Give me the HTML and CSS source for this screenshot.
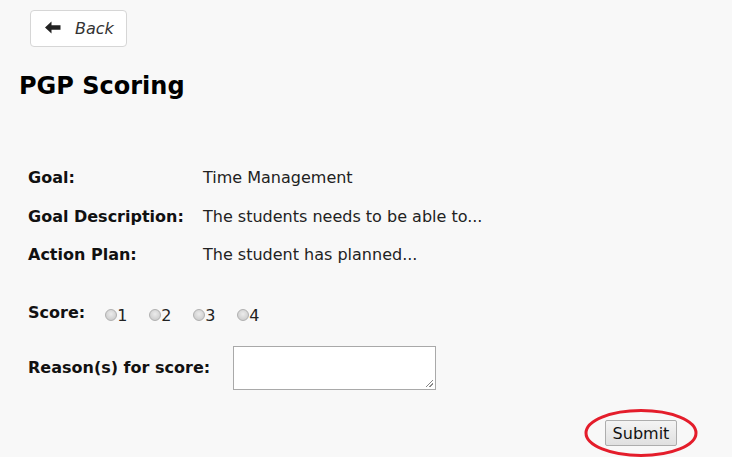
FILE: index.html
```html
<!DOCTYPE html>
<html>
<head>
<meta charset="utf-8">
<link rel="stylesheet" href="styles.css">
</head>
<body>
<div class="page">
  <div class="topbar">
    <button class="back-btn" type="button">
      <svg class="back-icon" width="16" height="13" viewBox="0 0 16 13"><path d="M0 6.5 L6.5 0.5 L6.5 4.3 L15.5 4.3 L15.5 8.7 L6.5 8.7 L6.5 12.5 Z" fill="#222"/></svg>
      <span class="back-text">Back</span>
    </button>
  </div>
  <h1 class="title">PGP Scoring</h1>
  <div class="details">
    <div class="row"><div class="label">Goal:</div><div class="value">Time Management</div></div>
    <div class="row"><div class="label">Goal Description:</div><div class="value">The students needs to be able to...</div></div>
    <div class="row"><div class="label">Action Plan:</div><div class="value">The student has planned...</div></div>
  </div>
  <div class="score">
    <span class="label">Score:</span>
    <label class="opt"><span class="radio"></span>1</label>
    <label class="opt"><span class="radio"></span>2</label>
    <label class="opt"><span class="radio"></span>3</label>
    <label class="opt"><span class="radio"></span>4</label>
  </div>
  <div class="reason">
    <span class="label">Reason(s) for score:</span>
    <div class="textarea"><span class="grip"></span></div>
  </div>
  <div class="actions">
    <div class="submit-wrap">
      <button class="submit" type="button">Submit</button>
      <svg class="ring" width="116" height="50" viewBox="0 0 116 50"><ellipse cx="58" cy="25" rx="55" ry="22.5" fill="none" stroke="#e41d2b" stroke-width="3"/></svg>
    </div>
  </div>
</div>
</body>
</html>
```
FILE: styles.css
```css
html, body { margin: 0; padding: 0; }
body {
  background: #f8f8f8;
  font-family: "DejaVu Sans", Verdana, sans-serif;
  color: #222;
  width: 732px;
  height: 457px;
  overflow: hidden;
}
.page { padding: 10px 0 0 0; }
.topbar { padding-left: 30px; }
.back-btn {
  display: flex;
  align-items: center;
  width: 97px;
  height: 37px;
  box-sizing: border-box;
  background: #fff;
  border: 1px solid #d6d6d6;
  border-radius: 4px;
  padding: 0 0 0 14px;
  font-family: inherit;
  cursor: pointer;
}
.back-icon { margin-top: -2px; }
.back-text {
  margin-left: 14px;
  font-style: italic;
  font-size: 16px;
  color: #333;
}
.title {
  margin: 25px 0 0 19px;
  font-size: 24px;
  font-weight: bold;
  color: #000;
  line-height: 28px;
}
.details { margin: 68px 0 0 28px; }
.row { display: flex; height: 38.5px; align-items: flex-start; }
.label { font-weight: bold; color: #111; font-size: 16px; }
.row .label { width: 175px; }
.value { font-size: 16px; color: #222; }
.score {
  margin: 19px 0 0 28px;
  display: flex;
  align-items: center;
  height: 24px;
}
.score .label { margin-right: 20px; margin-top: -5px; }
.opt {
  display: flex;
  align-items: center;
  font-size: 16px;
  width: 44px;
  color: #222;
  margin-top: 2px;
}
.radio {
  width: 10px;
  height: 10px;
  border-radius: 50%;
  border: 1px solid #b0b0b0;
  background: radial-gradient(circle at 50% 40%, #ececec, #c4c4c4);
  margin-right: 0;
  margin-top: -1px;
}
.reason {
  margin: 19px 0 0 28px;
  display: flex;
  align-items: center;
}
.reason .label { width: 205px; }
.textarea {
  position: relative;
  width: 203px;
  height: 44px;
  box-sizing: border-box;
  border: 1px solid #a9a9a9;
  background: #fff;
}
.grip {
  position: absolute;
  right: 2px;
  bottom: 2px;
  width: 7px;
  height: 7px;
  background: linear-gradient(135deg, transparent 45%, #888 45%, #888 55%, transparent 55%, transparent 70%, #888 70%, #888 80%, transparent 80%);
}
.actions {
  display: flex;
  justify-content: flex-end;
  padding-right: 33px;
  margin-top: 18px;
}
.submit-wrap {
  position: relative;
  width: 116px;
  height: 50px;
  display: flex;
  align-items: center;
  justify-content: center;
}
.submit {
  width: 72px;
  height: 26px;
  font-family: inherit;
  font-size: 16px;
  color: #111;
  background: linear-gradient(#f4f4f4, #e0e0e0);
  border: 1px solid #adadad;
  border-radius: 2px;
  padding: 0;
  margin-top: 1px;
}
.ring { position: absolute; left: 0; top: 0; pointer-events: none; }
```
